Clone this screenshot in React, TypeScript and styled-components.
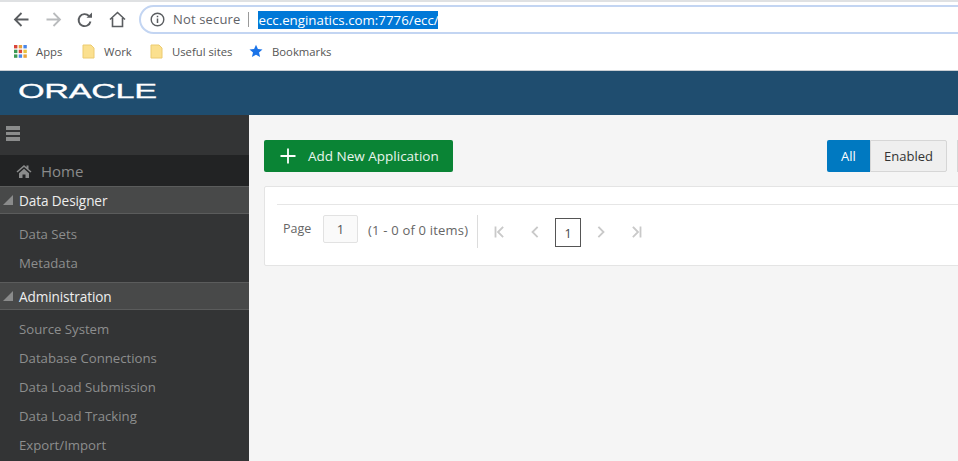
import React from "react";
import styled, { createGlobalStyle } from "styled-components";

const Global = createGlobalStyle`
  html, body { margin: 0; padding: 0; background: #fff; }
  #root { width: 958px; height: 461px; overflow: hidden; }
  * { box-sizing: border-box; }
`;

const Page = styled.div`
  width: 958px; height: 461px; display: flex; flex-direction: column; overflow: hidden;
  font-family: "Open Sans", "Noto Sans", "Liberation Sans", sans-serif;
`;
const TopStrip = styled.div`height: 2px; background: #dfe1e3; flex: none;`;
const Toolbar = styled.div`
  height: 33px; flex: none; display: flex; align-items: center; padding: 3px 0 1px 12px; background: #fff;
`;
const NavBtn = styled.button<{ $gap: number }>`
  width: 18px; height: 18px; padding: 0; margin-right: ${p => p.$gap}px; border: 0; background: none; display: flex;
  align-items: center; justify-content: center; flex: none;
`;
const Omnibox = styled.div`
  flex: 1; height: 29px; margin: 0 -30px 0 13px; display: flex; align-items: center; padding-left: 9px;
  border: 2px solid #c3d5f2; border-radius: 15px; background: #fff;
`;
const NotSecure = styled.span`font-size: 13px; color: #5f6368; margin-left: 8px; padding-right: 8px; border-right: 1px solid #9a9a9a; line-height: 15px; letter-spacing: .15px;`;
const Url = styled.span`
  margin-left: 9px; background: #0078d7; color: #fff; font-size: 13.3px; line-height: 18px; height: 18px;
  width: 180px; white-space: nowrap; overflow: hidden;
`;
const Bookmarks = styled.div`
  height: 36px; flex: none; display: flex; align-items: center; background: #fff; padding: 0 0 3px 14px;
  border-bottom: 1px solid #c9ced3; font-size: 11.3px; color: #555;
`;
const Bookmark = styled.span<{ $w: number }>`
  display: flex; align-items: center; gap: 9px; width: ${p => p.$w}px; flex: none; white-space: nowrap;
`;
const Header = styled.header`
  height: 44px; flex: none; background: #1f4d6f; display: flex; align-items: center; padding-left: 18px;
`;
const Logo = styled.span`
  display: inline-block; color: #fff; font-family: "Liberation Sans", Arial, sans-serif; font-size: 21px; font-weight: 400;
  line-height: 20px; transform: scaleX(1.63); transform-origin: left center; letter-spacing: -0.2px; -webkit-text-stroke: .3px #fff;
  margin-top: -5px;
`;
const Body = styled.div`flex: 1; display: flex; min-height: 0;`;
const Sidebar = styled.nav`
  width: 249px; flex: none; background: #333435; display: flex; flex-direction: column; overflow: hidden;
`;
const HamburgerRow = styled.div`height: 40px; flex: none; padding: 11px 0 0 6px; display: flex; flex-direction: column; gap: 2px;`;
const Bar = styled.i`display: block; width: 14px; height: 3.6px; background: #8b8c8c;`;
const HomeRow = styled.div`
  height: 31px; flex: none; background: #222324; display: flex; align-items: center; padding: 0 0 0 16px; gap: 9px;
  color: #8a8b8b; font-size: 15px;
`;
const Section = styled.div`
  height: 28px; flex: none; background: #484949; border-top: 1px solid #5b5c5c; border-bottom: 1px solid #5b5c5c;
  display: flex; align-items: center; color: #eee; font-size: 13.6px; letter-spacing: -0.1px; padding-left: 2px; gap: 5px;
`;
const Tri = styled.svg`width: 12px; height: 12px; flex: none;`;
const Items = styled.div<{ $top: number; $bottom: number }>`
  display: flex; flex-direction: column; padding: ${p => p.$top}px 0 ${p => p.$bottom}px 19px;
`;
const Item = styled.div`height: 29px; line-height: 29px; font-size: 13.2px; color: #8d8e8e; white-space: nowrap;`;
const Main = styled.main`
  flex: 1; min-width: 0; background: #f5f5f5; padding: 25px 0 0 15px; display: flex; flex-direction: column; gap: 14px;
`;
const TopRow = styled.div`display: flex; justify-content: space-between; height: 32px; flex: none;`;
const AddBtn = styled.button`
  width: 189px; height: 32px; border: 0; border-radius: 2px; background: #0a8435; color: #e8f5ec; display: flex;
  align-items: center; padding: 0 0 0 15px; gap: 11px; font: 13.5px "Open Sans", sans-serif; flex: none;
`;
const Filters = styled.div`display: flex; width: 131px; flex: none;`;
const AllBtn = styled.button`
  width: 43px; height: 32px; border: 0; background: #0079c1; color: #fff; font: 13px "Open Sans", sans-serif; padding: 0; border-radius: 2px 0 0 2px;
`;
const EnabledBtn = styled.button`
  width: 77px; height: 32px; border: 1px solid #d6d6d6; background: #efefef; color: #333; font: 13px "Open Sans", sans-serif;
  padding: 0; border-radius: 0 2px 2px 0;
`;
const NextFilter = styled.div`flex: 1; margin-left: 10px; height: 32px; border-left: 1px solid #d6d6d6;`;
const Card = styled.section`
  height: 80px; flex: none; margin-right: -4px; background: #fff; border: 1px solid #e4e4e4; border-radius: 2px; padding: 17px 0 0 12px;
`;
const Rule = styled.div`height: 1px; background: #e6e6e6;`;
const Pager = styled.div`display: flex; align-items: flex-start; padding: 10px 0 0 6px; font-size: 13px; color: #666;`;
const PageLabel = styled.span`line-height: 28px; width: 40px; flex: none; font-size: 12.5px;`;
const PageInput = styled.div`
  width: 35px; height: 28px; border: 1px solid #e2e2e2; border-radius: 2px; background: #fafafa; text-align: center; line-height: 26px; flex: none; color: #555;
`;
const Count = styled.span`line-height: 30px; width: 119px; padding-left: 10px; white-space: nowrap; flex: none; letter-spacing: .2px;`;
const Divider = styled.div`width: 1px; height: 33px; background: #dcdcdc; flex: none; margin-right: 15px;`;
const PageIcon = styled.svg`width: 12px; height: 12px; flex: none; margin-top: 11px;`;
const CurrentPage = styled.div`
  width: 26px; height: 29px; border: 1px solid #555; margin: 3px 14px 0 14px; text-align: center; line-height: 29px; font-size: 12.5px; color: #444; flex: none;
`;
const Gap = styled.div<{ $w: number }>`width: ${p => p.$w}px; flex: none;`;

const stroke = { fill: "none", strokeLinecap: "square" as const };

const Triangle = () => (
  <Tri viewBox="0 0 12 12"><path d="M11 1V11H1Z" fill="#8a8b8b" /></Tri>
);

const First = () => (
  <PageIcon viewBox="0 0 12 12" {...stroke} stroke="#c9c9c9" strokeWidth="1.8">
    <path d="M2.5 1.5v9M9.5 1.5L5 6l4.5 4.5" />
  </PageIcon>
);
const Prev = () => (
  <PageIcon viewBox="0 0 12 12" {...stroke} stroke="#c9c9c9" strokeWidth="1.8"><path d="M8 1.5L3.5 6 8 10.5" /></PageIcon>
);
const Next = () => (
  <PageIcon viewBox="0 0 12 12" {...stroke} stroke="#c9c9c9" strokeWidth="1.8"><path d="M4 1.5L8.5 6 4 10.5" /></PageIcon>
);
const Last = () => (
  <PageIcon viewBox="0 0 12 12" {...stroke} stroke="#c9c9c9" strokeWidth="1.8">
    <path d="M9.5 1.5v9M2.5 1.5L7 6l-4.5 4.5" />
  </PageIcon>
);

const Folder = () => (
  <svg width="13" height="15" viewBox="0 0 13 15" style={{ flex: "none" }}>
    <path d="M1 1h8l3 3v10H1Z" fill="#fbe08f" stroke="#eccb70" />
  </svg>
);

const AppsIcon = () => {
  const c = ["#d9453a", "#e8a33d", "#4a86e8", "#3d9a56", "#d9453a", "#e8c23d", "#3d9a56", "#4a86e8", "#e8a33d"];
  return (
    <svg width="13" height="13" viewBox="0 0 13 13" style={{ flex: "none" }}>
      {c.map((f, i) => (
        <rect key={i} x={(i % 3) * 4.7} y={Math.floor(i / 3) * 4.7} width="3.4" height="3.4" fill={f} />
      ))}
    </svg>
  );
};

export default function App() {
  return (
    <Page>
      <Global />
      <TopStrip />
      <Toolbar>
        <NavBtn $gap={14} aria-label="Back">
          <svg width="17" height="17" viewBox="0 0 17 17" fill="none" stroke="#5a5d60" strokeWidth="1.8">
            <path d="M15.5 8.5H2M8.5 2L2 8.5 8.5 15" />
          </svg>
        </NavBtn>
        <NavBtn $gap={14} aria-label="Forward">
          <svg width="17" height="17" viewBox="0 0 17 17" fill="none" stroke="#b9bbbd" strokeWidth="1.8">
            <path d="M1.5 8.5H15M8.5 2L15 8.5 8.5 15" />
          </svg>
        </NavBtn>
        <NavBtn $gap={14} aria-label="Reload">
          <svg width="16" height="16" viewBox="0 0 16 16" fill="none">
            <path d="M13.5 9.5A6 6 0 1 1 12 4" stroke="#5a5d60" strokeWidth="1.9" />
            <path d="M9.5 5.8H15V0.5Z" fill="#5a5d60" />
          </svg>
        </NavBtn>
        <NavBtn $gap={0} aria-label="Home">
          <svg width="17" height="17" viewBox="0 0 17 17" fill="none" stroke="#5a5d60" strokeWidth="1.6">
            <path d="M1 8.5L8.5 1.5 16 8.5M3.5 7v8.5h10V7" />
          </svg>
        </NavBtn>
        <Omnibox>
          <svg width="15" height="15" viewBox="0 0 15 15" fill="none" style={{ flex: "none" }}>
            <circle cx="7.5" cy="7.5" r="6.3" stroke="#5a5d60" strokeWidth="1.4" />
            <path d="M7.5 6.5v4.5M7.5 3.8v1.500" stroke="#5a5d60" strokeWidth="1.5" />
          </svg>
          <NotSecure>Not secure</NotSecure>
          <Url>ecc.enginatics.com:7776/ecc/</Url>
        </Omnibox>
      </Toolbar>
      <Bookmarks>
        <Bookmark $w={68}><AppsIcon />Apps</Bookmark>
        <Bookmark $w={68}><Folder />Work</Bookmark>
        <Bookmark $w={100}><Folder />Useful sites</Bookmark>
        <Bookmark $w={100}>
          <svg width="14" height="14" viewBox="0 0 14 14" style={{ flex: "none", marginLeft: -1 }}>
            <path d="M7 .8l1.900 4.300 4.600.4-3.500 3 1.100 4.600L7 10.700l-4.100 2.400L4 8.500l-3.500-3 4.600-.4Z" fill="#1a73e8" />
          </svg>
          Bookmarks
        </Bookmark>
      </Bookmarks>
      <Header><Logo>ORACLE</Logo></Header>
      <Body>
        <Sidebar>
          <HamburgerRow><Bar /><Bar /><Bar /></HamburgerRow>
          <HomeRow>
            <svg width="16" height="14" viewBox="0 0 16 14" style={{ flex: "none" }}>
              <path d="M8 1L0.5 7.5l1 1L8 3l6.500 5.500 1-1L12.500 5V1.500h-2v1.800ZM3 9.300L8 4.800l5 4.500V14H9.500v-3.500h-3V14H3Z" fill="#8a8b8b" />
            </svg>
            Home
          </HomeRow>
          <Section><Triangle />Data Designer</Section>
          <Items $top={6} $bottom={4}>
            <Item>Data Sets</Item>
            <Item>Metadata</Item>
          </Items>
          <Section><Triangle />Administration</Section>
          <Items $top={5} $bottom={0}>
            <Item>Source System</Item>
            <Item>Database Connections</Item>
            <Item>Data Load Submission</Item>
            <Item>Data Load Tracking</Item>
            <Item>Export/Import</Item>
          </Items>
        </Sidebar>
        <Main>
          <TopRow>
            <AddBtn>
              <svg width="18" height="18" viewBox="0 0 18 18" stroke="#fff" strokeWidth="1.8" style={{ flex: "none" }}>
                <path d="M9 1.500v15M1.500 9h15" />
              </svg>
              Add New Application
            </AddBtn>
            <Filters>
              <AllBtn>All</AllBtn>
              <EnabledBtn>Enabled</EnabledBtn>
              <NextFilter />
            </Filters>
          </TopRow>
          <Card>
            <Rule />
            <Pager>
              <PageLabel>Page</PageLabel>
              <PageInput>1</PageInput>
              <Count>(1 - 0 of 0 items)</Count>
              <Divider />
              <First />
              <Gap $w={24} />
              <Prev />
              <CurrentPage>1</CurrentPage>
              <Next />
              <Gap $w={24} />
              <Last />
            </Pager>
          </Card>
        </Main>
      </Body>
    </Page>
  );
}
